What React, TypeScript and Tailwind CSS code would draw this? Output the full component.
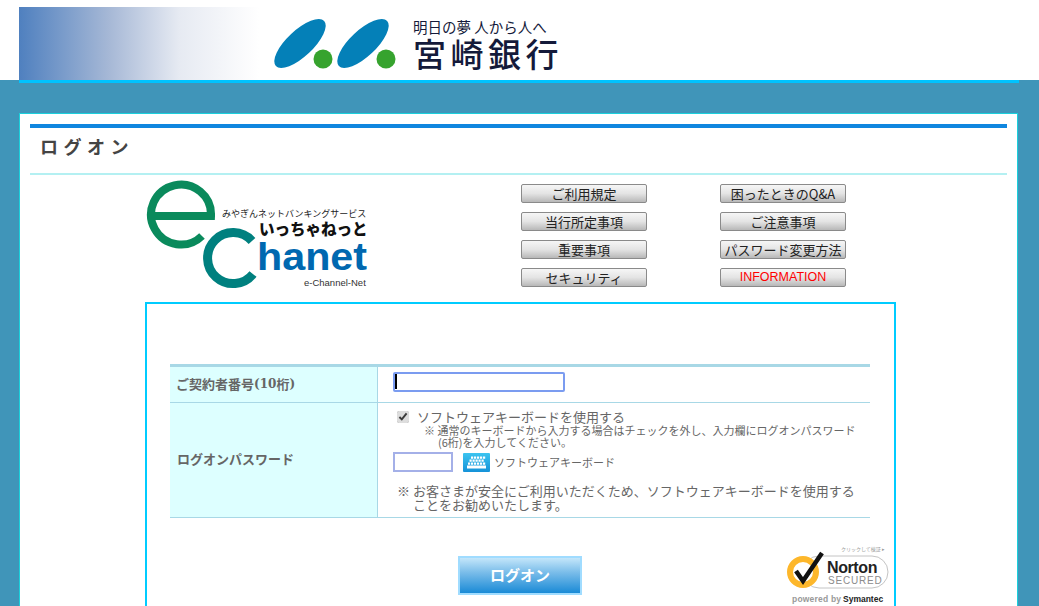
const jp = "font-['Noto_Sans_CJK_JP','Liberation_Sans',sans-serif]";

function BankLogo() {
  return (
    <div className="flex items-center gap-[17px] h-[73px] pl-[255px] bg-[linear-gradient(90deg,#4f80bf_0px,#a6b8d6_90px,#e6eaf2_160px,#ffffff_240px)]">
      <svg width="122" height="50" viewBox="0 0 122 50" className="mt-[1px]">
        <ellipse cx="26" cy="24.500" rx="33" ry="13" transform="rotate(-43 26 24.500)" fill="#0480b8" />
        <ellipse cx="89" cy="24.500" rx="33" ry="13" transform="rotate(-43 89 24.500)" fill="#0480b8" />
        <circle cx="49" cy="40" r="9.500" fill="#36a32e" />
        <circle cx="112" cy="40" r="9.500" fill="#36a32e" />
      </svg>
      <div className="flex flex-col text-[#141a3a] mt-[1px]">
        <span className="text-[14.500px] leading-[17px]">明日の夢 人から人へ</span>
        <span className="text-[33px] leading-[36px] tracking-[4.500px] font-medium">宮崎銀行</span>
      </div>
    </div>
  );
}

function EChanetLogo() {
  return (
    <svg width="222" height="110" viewBox="0 0 222 110" className="shrink-0">
      <path d="M5 36 H65 A30 30 0 1 0 56 56" fill="none" stroke="#0a8a5c" strokeWidth="8" />
      <path d="M106 61 A25.500 25.500 0 1 0 107 94" fill="none" stroke="#00807f" strokeWidth="9" />
      <text x="76" y="37" fontSize="9" fill="#222" fontFamily="Noto Sans CJK JP">みやぎんネットバンキングサービス</text>
      <text x="113" y="55" fontSize="15.500" fontWeight="900" fill="#111" fontFamily="Noto Sans CJK JP">いっちゃねっと</text>
      <text x="111" y="90" fontSize="39" fontWeight="700" textLength="110" lengthAdjust="spacingAndGlyphs" fill="#0068b0" fontFamily="Liberation Sans">hanet</text>
      <text x="158" y="106" fontSize="9.500" fill="#333" fontFamily="Liberation Sans">e-Channel-Net</text>
    </svg>
  );
}

function NavButton({ label, red }: { label: string; red?: boolean }) {
  return (
    <a
      className={`flex items-center justify-center w-[126px] h-[19px] rounded-[2px] border border-[#8a8a8a] bg-[linear-gradient(#f6f6f6,#e4e4e4_50%,#b8b8b8)] leading-none ${
        red ? "text-[#ff0000] text-[12.500px] font-['Liberation_Sans',sans-serif]" : "text-[#222] text-[13px]"
      }`}
    >
      {label}
    </a>
  );
}

function KeyboardIcon() {
  return (
    <svg width="27" height="19" viewBox="0 0 27 19">
      <defs>
        <linearGradient id="kb" x1="0" y1="0" x2="0" y2="1">
          <stop offset="0" stopColor="#3cc4f0" />
          <stop offset="1" stopColor="#1592d8" />
        </linearGradient>
      </defs>
      <rect width="27" height="19" rx="1" fill="url(#kb)" />
      <path d="M8 3.500h2.200v2.200H8zM11 3.500h2.200v2.200H11zM14 3.500h2.200v2.200H14zM17 3.500h2.200v2.200H17zM20 3.500h2.200v2.200H20zM6.500 6.500h2.200v2.200H6.500zM9.500 6.500h2.200v2.200H9.500zM12.500 6.500h2.200v2.200h-2.200zM15.500 6.500h2.200v2.200h-2.200zM18.500 6.500h2.200v2.200h-2.200zM5 9.500h2.200v2.200H5zM8 9.500h2.200v2.200H8zM11 9.500h2.200v2.200H11zM14 9.500h2.200v2.200H14zM17 9.500h2.200v2.200H17zM20 9.500h2.200v2.200H20zM4 12.500h19v3H4z" fill="#fff" />
    </svg>
  );
}

function NortonSeal() {
  return (
    <svg width="102" height="61" viewBox="0 0 102 61" className="shrink-0">
      <text x="54" y="6" fontSize="5" fill="#999" fontFamily="Noto Sans CJK JP">クリックして検証 ▸</text>
      <rect x="16" y="11" width="85" height="32" rx="16" fill="#fff" stroke="#c4c4c4" />
      <circle cx="16" cy="27" r="13" fill="#fff" stroke="#fdb72b" strokeWidth="6" />
      <path d="M9 26 L16 36 L35 8" fill="none" stroke="#111" strokeWidth="4.500" />
      <text x="40" y="28" fontSize="16" fontWeight="700" letterSpacing="-0.4" fill="#222" fontFamily="Liberation Sans">Norton</text>
      <text x="41" y="39" fontSize="10" letterSpacing="0.8" fill="#8c8c8c" fontFamily="Liberation Sans">SECURED</text>
      <text x="5" y="57" fontSize="8.500" fontWeight="700" letterSpacing="0.2" fill="#999" fontFamily="Liberation Sans">powered by</text>
      <text x="56" y="57" fontSize="8.500" fontWeight="700" fill="#222" fontFamily="Liberation Sans">Symantec</text>
    </svg>
  );
}

export default function App() {
  return (
    <div className={`h-screen overflow-hidden bg-[#4095b9] text-[#666] ${jp}`}>
      {/* Header */}
      <div className="bg-white h-20">
        <div className="w-[1000px] ml-[19px] pt-[7px]">
          <BankLogo />
        </div>
      </div>
      <div className="w-[1000px] ml-[19px] h-[3px] bg-[#00c3ff]" />

      {/* Panel */}
      <div className="w-[999px] ml-[19px] mt-[30px] bg-white border border-[#1ad0dc] pt-[10px]">
        <div className="mx-[10px] h-1 bg-[#0f86df]" />
        <h1 className="mx-[10px] h-[47px] pl-[10px] pb-[9px] flex items-center border-b-2 border-[#b4f0f2] text-[18px] font-bold tracking-[5.500px] text-[#444]">
          ログオン
        </h1>

        {/* Logo and link buttons */}
        <div className="flex h-[127px] pl-[126px] pt-[5px]">
          <EChanetLogo />
          <div className="grid grid-cols-[126px_126px] gap-x-[73px] gap-y-[9px] ml-[153px] mt-[4px] h-fit">
            <NavButton label="ご利用規定" />
            <NavButton label="困ったときのQ&A" />
            <NavButton label="当行所定事項" />
            <NavButton label="ご注意事項" />
            <NavButton label="重要事項" />
            <NavButton label="パスワード変更方法" />
            <NavButton label="セキュリティ" />
            <NavButton label="INFORMATION" red />
          </div>
        </div>

        {/* Login form */}
        <div className="ml-[125px] w-[751px] h-[400px] border-2 border-[#00ccff] pt-[60px]">
          <div className="ml-[23px] w-[700px] border-t-[3px] border-[#a8d8e6]">
            <div className="flex h-[36px] border-b border-[#a8d8e6]">
              <div className="w-[208px] flex items-center pl-[6px] pb-[2px] bg-[#ddffff] border-r border-[#a8d8e6] text-[13px] font-bold text-[#666]">
                ご契約者番号<span className="font-['DejaVu_Serif',serif] text-[12px]">(10</span>桁<span className="font-['DejaVu_Serif',serif] text-[12px]">)</span>
              </div>
              <div className="relative flex items-center pl-[15px] pb-[5px]">
                <input
                  type="text"
                  className="w-[172px] h-[20px] border-2 border-[#7b9cf0] rounded-[2px] outline-none"
                />
                <span className="absolute left-[17px] top-[7px] w-[2px] h-[15px] bg-black" />
              </div>
            </div>
            <div className="flex h-[115px] border-b border-[#a8d8e6]">
              <div className="w-[208px] flex items-center pl-[7px] pb-[3px] bg-[#ddffff] border-r border-[#a8d8e6] text-[13px] font-bold text-[#666]">
                ログオンパスワード
              </div>
              <div className="pl-[15px] pt-[6px]">
                <label className="flex items-center pl-[4px] text-[13px] leading-[16px]">
                  <input type="checkbox" defaultChecked className="w-3 h-3 accent-[#dddddd]" />
                  <span className="ml-[8px]">ソフトウェアキーボードを使用する</span>
                </label>
                <p className="pl-[31px] mt-[-1px] text-[11px] leading-[12px]">※ 通常のキーボードから入力する場合はチェックを外し、入力欄にログオンパスワード</p>
                <p className="pl-[45px] text-[11px] leading-[12px]">(6桁)を入力してください。</p>
                <div className="flex items-center mt-[4px]">
                  <input type="password" className="w-[60px] h-[20px] border-2 border-[#a4b0e8] outline-none" />
                  <span className="ml-[10px] flex">
                    <KeyboardIcon />
                  </span>
                  <span className="ml-[4px] text-[11px]">ソフトウェアキーボード</span>
                </div>
                <p className="pl-[4px] mt-[12px] text-[13px] leading-[14px]">※ お客さまが安全にご利用いただくため、ソフトウェアキーボードを使用する</p>
                <p className="pl-[20px] text-[13px] leading-[14px]">ことをお勧めいたします。</p>
              </div>
            </div>
          </div>

          <div className="flex mt-[27px] pl-[311px]">
            <button className="shrink-0 w-[124px] h-[39px] mt-[11px] border-2 border-[#a0dcff] bg-[linear-gradient(#c4e6fa,#7cbeea_40%,#1a8ad6)] text-[15px] font-bold text-white">
              ログオン
            </button>
            <div className="ml-[205px] shrink-0">
              <NortonSeal />
            </div>
          </div>
        </div>
      </div>
    </div>
  );
}
